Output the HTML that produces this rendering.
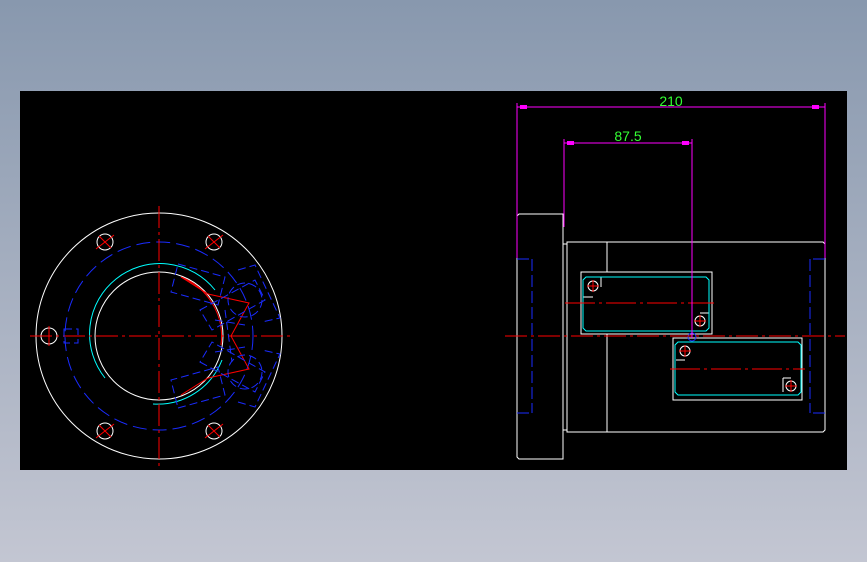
<!DOCTYPE html>
<html><head><style>
html,body{margin:0;padding:0;}
body{width:867px;height:562px;background:linear-gradient(#8898ae,#c3c6d2);position:relative;overflow:hidden;font-family:"Liberation Sans",sans-serif;}
svg{position:absolute;left:0;top:0;}
</style></head><body>
<svg width="867" height="562" viewBox="0 0 867 562">
<rect x="20" y="91" width="827" height="379" fill="#000"/>
<g fill="none" stroke-width="1">
<!-- LEFT VIEW -->
<circle cx="159" cy="336" r="123" stroke="#fff"/>
<circle cx="159" cy="336" r="94" stroke="#1a2cff" stroke-dasharray="14 6"/>
<path d="M105 378 A67 67 0 0 1 215 290" stroke="#0ff"/>
<path d="M153 404 A69 69 0 0 0 222 360" stroke="#0ff"/>
<circle cx="159" cy="336" r="64" stroke="#fff"/>
<g stroke="#fff">
<circle cx="105" cy="242" r="8"/><circle cx="214" cy="242" r="8"/>
<circle cx="105" cy="431" r="8"/><circle cx="214" cy="431" r="8"/>
<circle cx="49" cy="336" r="8"/>
</g>
<g stroke="#f00">
<path d="M96 249 L114 235 M99 236 L111 248 M205 249 L223 235 M208 236 L220 248 M96 438 L114 424 M99 425 L111 437 M205 438 L223 424 M208 425 L220 437 M49 326 V346"/>
<path d="M30 336 H290" stroke-dasharray="22 4 3 4"/>
<path d="M159 206 V466" stroke-dasharray="22 4 3 4"/>
<path d="M181 277 L208 294 L249 303 L231 336 L249 369 L208 378 L181 395"/>
<path d="M181 277 A64 64 0 0 1 221 345"/>
</g>
<g stroke="#1a2cff" stroke-dasharray="8 4">
<rect x="64" y="329" width="14" height="14"/>
<path d="M178 264 L225 277 L218 305 L171 292 Z"/>
<path d="M178 408 L225 395 L218 367 L171 380 Z"/>
<path d="M200 310 L255 280 L265 300 L212 330 Z"/>
<path d="M200 362 L255 392 L265 372 L212 342 Z"/>
<path d="M238 270 L255 265 L280 318 L262 322"/>
<path d="M238 402 L255 407 L280 354 L262 350"/>
<circle cx="245" cy="300" r="17"/><circle cx="245" cy="372" r="17"/>
<path d="M215 320 L245 325 M215 352 L245 347 M225 310 L232 362"/>
</g>
<!-- RIGHT VIEW -->
<g stroke="#fff">
<path d="M519 214 H563 V459 H519 L517 457 V216 Z"/>
<path d="M563 244 H567 M563 430 H567"/>
<path d="M567 242 H823 L825 244 V430 L823 432 H567 Z"/>
<path d="M607 242 V272 M607 334 V432"/>
<rect x="581" y="272" width="131" height="62"/>
<rect x="673" y="338" width="129" height="62"/>
<circle cx="593" cy="286" r="5"/><circle cx="700" cy="321" r="5"/>
<circle cx="685" cy="351" r="5"/><circle cx="791" cy="386" r="5"/>
<path d="M583 297 H593 M601 277 V287 M709 313 H700 M700 313 V313 M676 360 H685 M783 378 H791 M783 378 V392"/>
</g>
<g stroke="#0ff">
<path d="M586 277 H706 L709 280 V328 L706 331 H586 L583 328 V280 Z"/>
<path d="M678 342 H798 L801 345 V392 L798 395 H678 L675 392 V345 Z"/>
</g>
<g stroke="#1a2cff">
<path d="M517 259 H532 M517 413 H532 M532 259 V413" stroke-dasharray="12 4"/>
<path d="M825 259 H810 M825 413 H810 M810 259 V413" stroke-dasharray="12 4"/>
<circle cx="692" cy="337" r="4"/>
</g>
<g stroke="#f00">
<path d="M505 336 H845" stroke-dasharray="22 4 3 4"/>
<path d="M565 303 H714" stroke-dasharray="30 4 3 4"/>
<path d="M670 369 H805" stroke-dasharray="30 4 3 4"/>
<path d="M593 280 V292 M587 286 H599 M700 315 V327 M694 321 H706 M685 345 V357 M679 351 H691 M791 380 V392 M785 386 H797"/>
</g>
<g stroke="#f0f">
<path d="M517 107 H825 M517 103 V258 M825 103 V258"/>
<path d="M564 143 H692 M564 139 V227 M692 139 V338"/>
</g>
<g fill="#f0f"><rect x="520" y="105" width="7" height="4"/><rect x="812" y="105" width="7" height="4"/><rect x="567" y="141" width="7" height="4"/><rect x="682" y="141" width="7" height="4"/></g>
</g>
<text x="671" y="106" fill="#3f3" font-size="14" text-anchor="middle" font-family="Liberation Sans">210</text>
<text x="628" y="141" fill="#3f3" font-size="14" text-anchor="middle" font-family="Liberation Sans">87.5</text>
</svg>
</body></html>
